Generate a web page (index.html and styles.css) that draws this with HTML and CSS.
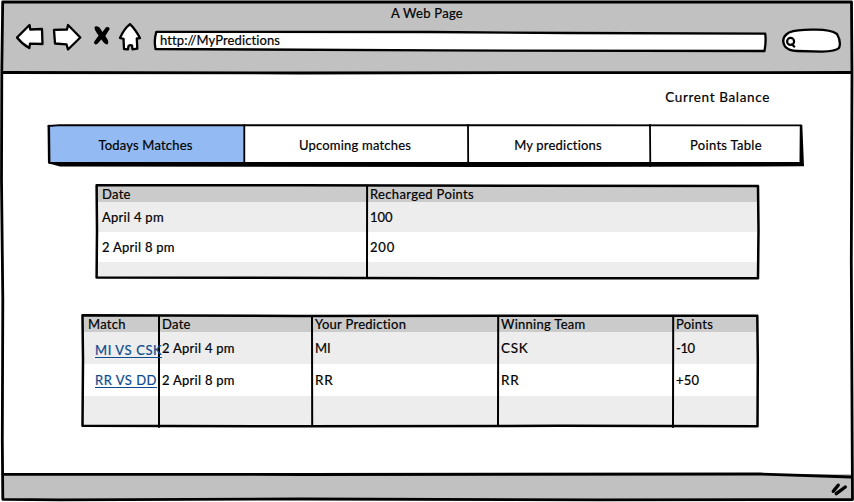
FILE: index.html
```
<!DOCTYPE html>
<html lang="en">
<head>
<meta charset="utf-8">
<title>A Web Page</title>
<link rel="stylesheet" href="styles.css">
</head>
<body>
<div class="window">
  <header class="chrome">
    <div class="title">A Web Page</div>
    <div class="toolbar">
      <svg class="nav-icons" width="130" height="34" viewBox="14 20 130 34">
        <g class="sketch">
          <path d="M17 37.5 L29.5 25 L30.3 29.5 L42 29 L42.5 44 L30 43.7 L29.3 48 Q22 44 17 37.5Z"/>
          <path d="M54 29.8 L67 29.5 L68 25 Q74 31 80.3 37.5 L68 49.5 L66.5 44.3 L55 43.5Z"/>
          <path d="M130 24.2 Q135 29 140 38 L136.8 38.5 L137.3 48.7 L132.5 49.3 L132 45.5 Q130 44.5 128.5 46 L128 49.3 L124 49 L123.5 38.8 L120 38 Q124 29 130 24.2Z"/>
        </g>
        <path class="blob" d="M94.6 27 Q95.8 25.3 99.5 27.5 L102.5 32 L106 27.3 Q109.6 26.3 109.7 29 L105.3 36 Q109.5 41.5 107.8 44 Q106 46 101.3 39.6 L97.3 44 Q94 45.5 94 42 L98.6 35.5 Q94 29.5 94.6 27Z"/>
      </svg>
      <div class="address">
        <svg class="frame" width="616" height="26" viewBox="152 28 616 26">
          <path class="sketch" d="M156.3 31.8 L430 32 L568 33 L765.2 33.7 Q766.3 41 764.5 51 L440 50.4 L155.5 49 Q153.8 40 156.3 31.8Z"/>
        </svg>
        <span class="url">http://MyPredictions</span>
      </div>
      <svg class="search" width="62" height="26" viewBox="780 28 62 26">
        <path class="sketch" d="M789 32.5 Q797 29.6 812 29.7 Q830 29 837 34 Q841.5 42 839 48 Q836 51 822 51.7 L797 51 Q789 51 785 46.5 Q780 38 789 32.5Z"/>
        <circle class="lens" cx="790.6" cy="41.4" r="3.5"/>
        <path class="lens" d="M792 44.5 L794.3 46.6"/>
      </svg>
    </div>
  </header>

  <main class="page">
    <div class="balance">Current Balance</div>

    <nav class="tabs">
      <a class="tab active">Todays Matches</a>
      <a class="tab">Upcoming matches</a>
      <a class="tab">My predictions</a>
      <a class="tab last">Points Table</a>
      <svg class="frame" width="758" height="46" viewBox="46 122 758 46">
        <path class="shadow" d="M49 162 L799.5 162 L799.8 124.8 L802.3 125 L804 166.3 L500 167 L60 166.5 L49 163.5Z"/>
        <path class="line top" d="M48.5 126 L60 125.2 L801 125.3"/>
        <path class="line side" d="M48.8 126 L49.2 162.5"/>
        <path class="line rule" d="M244.3 125 L244.3 163 M468 125 L468.2 163 M650 125 L650.3 166"/>
      </svg>
    </nav>

    <section class="recharges">
      <div class="row head"><span>Date</span><span class="wider">Recharged Points</span></div>
      <div class="row shade"><span>April 4 pm</span><span class="flush">100</span></div>
      <div class="row"><span>2 April 8 pm</span><span class="digits">200</span></div>
      <div class="row foot shade"></div>
      <svg class="frame" width="668" height="98" viewBox="94 182 668 98">
        <path class="line" d="M96.6 185.3 L300 185.2 L520 185.8 L758 186 L758.5 230 L758 278.2 L450 278.2 L250 277.8 L96.6 277.5 L97 230Z"/>
        <path class="line divide" d="M367.1 186 L367 277"/>
      </svg>
    </section>

    <section class="matches">
      <div class="row head"><span>Match</span><span>Date</span><span>Your Prediction</span><span>Winning Team</span><span>Points</span></div>
      <div class="row shade"><span><a class="link low">MI VS CSK</a></span><span>2 April 4 pm</span><span class="flush">MI</span><span class="caps">CSK</span><span class="minus">-10</span></div>
      <div class="row"><span><a class="link">RR VS DD</a></span><span>2 April 8 pm</span><span class="caps">RR</span><span class="caps">RR</span><span>+50</span></div>
      <div class="row foot shade"></div>
      <svg class="frame" width="680" height="116" viewBox="80 313 680 116">
        <path class="line" d="M82.5 315.3 L300 316 L560 315.7 L757.3 315.8 L757.8 360 L757.5 426.3 L560 425.8 L300 426.3 L82.5 425.8 L83 360Z"/>
        <path class="line divide" d="M159 316 L159 427 M312 316 L312.2 425 M498.2 316 L498 425 M673.2 316 L673 427"/>
      </svg>
    </section>
  </main>

  <footer class="status">
    <svg class="grip" width="20" height="16" viewBox="830 481 20 16">
      <path d="M834.3 491.3 L839.2 485.2 M837.3 493.7 L846.3 487"/>
    </svg>
  </footer>

  <svg class="window-frame" width="854" height="502" viewBox="0 0 854 502">
    <path d="M2.7 2 L851.5 2 L852 75 L851.3 260 L852.5 499.5 L600 499.8 L300 499 L60 499.8 L2.8 499.3 L2.3 440 L2.8 300 L1.5 180 L1.8 70Z"/>
    <path d="M3 72.5 L300 73 L560 72.6 L851 72.5 M3 474.3 L300 474.5 L760 474 L851 477"/>
  </svg>
</div>
</body>
</html>
```
FILE: styles.css
```
* {
  box-sizing: border-box;
}

body {
  margin: 0;
  background: #fff;
  color: #000;
  font-family: Lato, "Open Sans", sans-serif;
  font-size: 13px;
  letter-spacing: 0.27px;
  font-variant-ligatures: none;
  -webkit-text-stroke: 0.2px;
}

svg {
  display: block;
  fill: none;
  stroke: #000;
  stroke-linejoin: round;
  stroke-linecap: round;
}

.window {
  position: relative;
  display: grid;
  grid-template-rows: 73px 401px 26px;
  width: 854px;
  height: 502px;
  overflow: hidden;
  padding: 0 2px;
}

.window-frame {
  position: absolute;
  inset: 0;
  stroke-width: 2.8;
}

.chrome {
  margin-top: 2px;
  background: #c1c1c1;
}

.title {
  height: 18px;
  padding-top: 1px;
  line-height: 20px;
  text-align: center;
}

.toolbar {
  display: flex;
  align-items: flex-start;
  padding-left: 12px;
}

.sketch {
  fill: #fff;
  stroke-width: 2.3;
}

.blob {
  fill: #000;
  stroke: none;
}

.lens {
  stroke-width: 2.2;
}

.address {
  position: relative;
  width: 616px;
  height: 26px;
  margin: 8px 0 0 8px;
}

.frame {
  position: absolute;
  top: 0;
  left: 0;
}

.url {
  position: relative;
  display: block;
  padding-left: 8px;
  line-height: 25px;
  letter-spacing: 0.1px;
}

.search {
  margin: 8px 0 0 12px;
}

.balance {
  padding: 14px 82px 0 0;
  text-align: right;
  line-height: 20px;
  font-size: 13.5px;
  letter-spacing: 0.65px;
}

.tabs {
  position: relative;
  display: grid;
  grid-template-columns: 195px 224px 182px 152px;
  width: 758px;
  height: 46px;
  margin: 15px 0 0 44px;
  padding: 4px 2px 0 3px;
}

.tab {
  height: 38px;
  padding-right: 2px;
  line-height: 38px;
  letter-spacing: 0.2px;
  text-align: center;
}

.tab.last {
  padding: 0;
  letter-spacing: 0.3px;
}

.tab.active {
  background: #93baf2;
}

.line {
  stroke-width: 2.5;
}

.top,
.rule {
  stroke-width: 1.8;
}

.divide {
  stroke-width: 2;
}

.shadow {
  fill: #000;
  stroke: none;
}

.recharges,
.matches {
  position: relative;
}

.recharges {
  width: 668px;
  height: 98px;
  margin: 14px 0 0 92px;
  padding: 4px 4px 0 3px;
}

.matches {
  width: 680px;
  height: 116px;
  margin: 33px 0 0 78px;
  padding: 3px 3px 0;
}

.row {
  display: grid;
  white-space: nowrap;
}

.recharges .row {
  grid-template-columns: 270px 1fr;
  height: 30px;
  line-height: 30px;
}

.matches .row {
  grid-template-columns: 76px 153px 186px 175px 1fr;
  height: 32px;
  line-height: 32px;
}

.recharges .head,
.matches .head {
  height: 16px;
  line-height: 16px;
  background: #cbcbcb;
}

.row span {
  padding-left: 3px;
}

.row span:first-child {
  padding-left: 5px;
}

.shade {
  background: #ededed;
}

.recharges .foot {
  height: 15px;
}

.matches .foot {
  height: 30px;
}

.wider {
  letter-spacing: 0.34px;
}

.flush {
  letter-spacing: 0;
}

.digits {
  letter-spacing: 0.8px;
}

.caps {
  font-size: 13.5px;
  letter-spacing: 0.7px;
}

.minus {
  letter-spacing: -0.45px;
}

.link {
  position: relative;
  z-index: 1;
  display: block;
  width: max-content;
  height: 16px;
  margin: 8px 0 0 7px;
  border-bottom: 1px solid #0b4a8f;
  color: #0b4a8f;
  line-height: 16px;
  letter-spacing: 0.5px;
}

.link.low {
  margin-top: 10px;
  letter-spacing: 0.6px;
}

.status {
  display: flex;
  justify-content: flex-end;
  background: #c1c1c1;
}

.grip {
  margin: 7px 3px 0 0;
  stroke-width: 3.4;
}
```
